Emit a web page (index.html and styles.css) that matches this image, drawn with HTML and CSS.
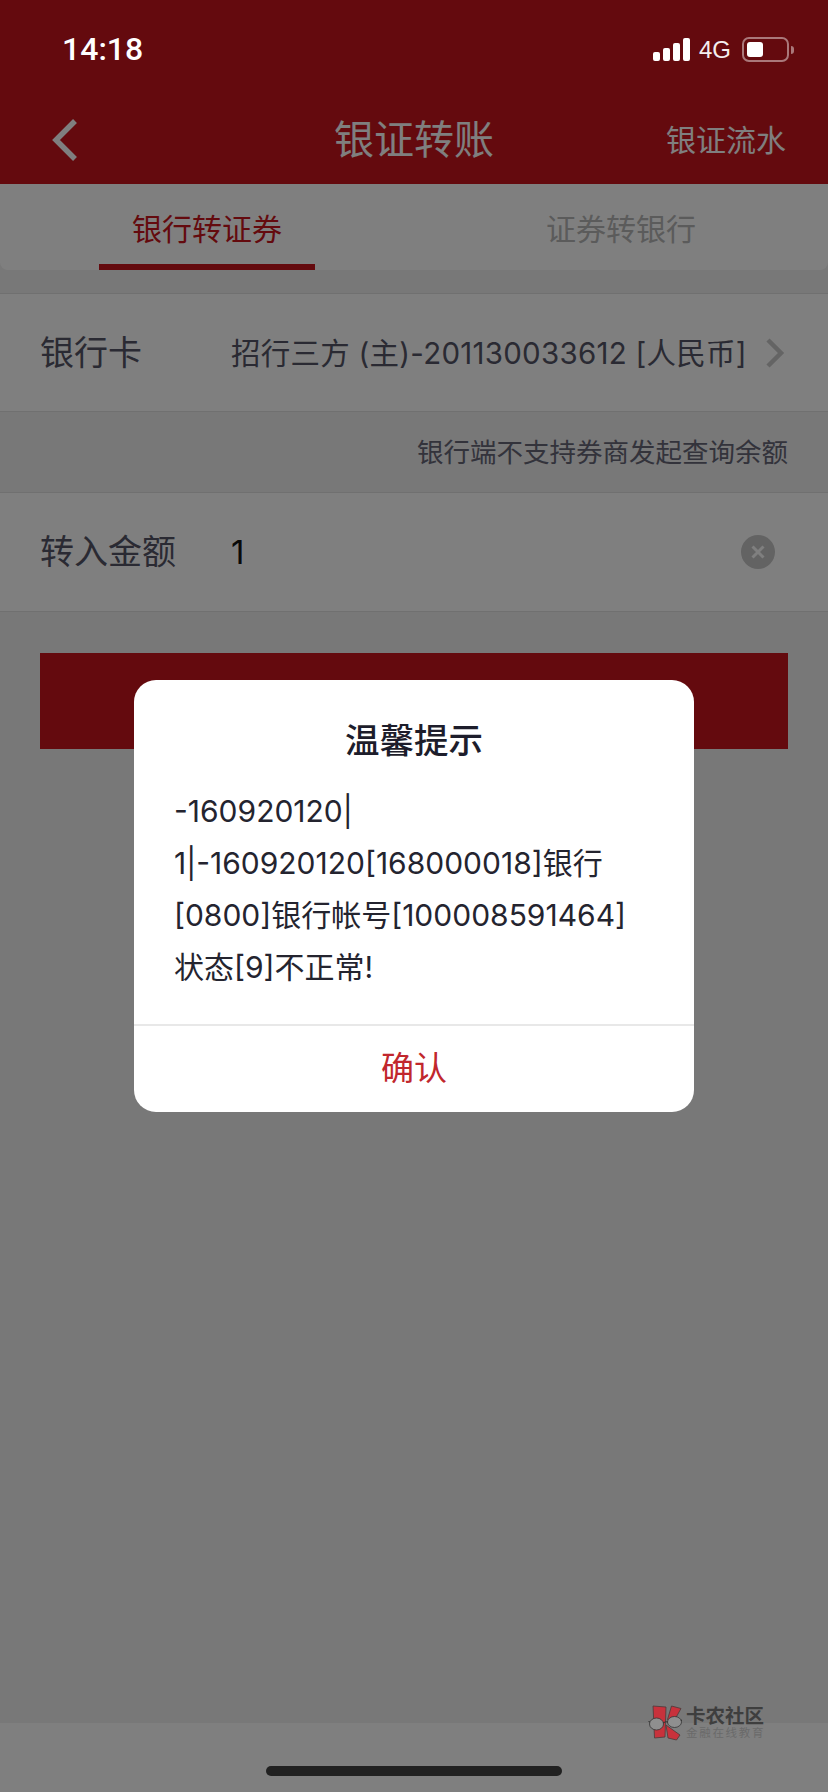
FILE: index.html
```html
<!DOCTYPE html>
<html lang="zh-CN">
<head>
    <meta charset="UTF-8">
    <meta name="viewport" content="width=device-width, initial-scale=1.0">
    <title>银证转账</title>
    <link rel="stylesheet" href="styles.css">
</head>
<body>
    <div class="page">
        <div class="app">
            <header class="header">
                <div class="status-space"></div>
                <div class="nav">
                    <svg class="back" viewBox="0 0 26 42"><path d="M23 2 L4 21 L23 40"/></svg>
                    <div class="nav-title">银证转账</div>
                    <div class="nav-link">银证流水</div>
                </div>
            </header>

            <div class="tabs">
                <div class="tab"><span class="tab-label active">银行转证券</span></div>
                <div class="tab"><span class="tab-label">证券转银行</span></div>
            </div>

            <main class="content">
                <div class="row row-card">
                    <div class="row-label">银行卡</div>
                    <div class="row-value">招行三方 (主)-201130033612 [人民币]</div>
                    <svg class="chevron" viewBox="0 0 20 32"><path d="M3 3 L16 16 L3 29"/></svg>
                </div>
                <div class="note">银行端不支持券商发起查询余额</div>
                <div class="row row-amount">
                    <div class="row-label">转入金额</div>
                    <div class="row-value amount">1</div>
                    <svg class="clear" viewBox="0 0 34 34">
                        <circle cx="17" cy="17" r="17"/>
                        <path d="M11.5 11.5 L22.5 22.5 M22.5 11.5 L11.5 22.5"/>
                    </svg>
                </div>
                <div class="submit"></div>
            </main>

            <div class="safe-area"></div>
        </div>

        <!-- 遮罩和弹窗 -->
        <div class="overlay">
            <div class="dialog">
                <div class="dialog-title">温馨提示</div>
                <div class="dialog-body">-160920120|<br>1|-160920120[168000018]银行<br>[0800]银行帐号[100008591464]<br>状态[9]不正常!</div>
                <div class="dialog-btn">确认</div>
            </div>
        </div>

        <div class="status-bar">
            <div class="time">14:18</div>
            <div class="status-right">
                <div class="signal">
                    <span class="bar bar1"></span>
                    <span class="bar bar2"></span>
                    <span class="bar bar3"></span>
                    <span class="bar bar4"></span>
                </div>
                <div class="network">4G</div>
                <div class="battery"><span class="battery-level"></span></div>
                <span class="battery-cap"></span>
            </div>
        </div>

        <div class="watermark">
            <svg class="wm-logo" viewBox="0 0 34 36">
                <path class="wm-red" d="M5 1 L18 2 L17 32 L6.5 33 Z"/>
                <path class="wm-red" d="M23.5 1 L33 3.5 L25.5 17 L19.5 14.5 Z"/>
                <path class="wm-red" d="M18 20 L32 30 L28.5 35 L20 33 Z"/>
                <ellipse class="wm-lens" cx="8.5" cy="19" rx="7" ry="6"/>
                <ellipse class="wm-lens" cx="26.5" cy="17" rx="7" ry="5.5"/>
                <path class="wm-frame" d="M15 18 Q17.5 16 20 17 M2 17 L0.5 16.5 M33 16 L34 14.5"/>
            </svg>
            <div class="wm-text">
                <div class="wm-name">卡农社区</div>
                <div class="wm-sub">金融在线教育</div>
            </div>
        </div>

        <div class="home-bar"></div>
    </div>
</body>
</html>
```

FILE: styles.css
```css
* {
    box-sizing: border-box;
}

body {
    margin: 0;
    font-family: Inter, "Noto Sans CJK SC", sans-serif;
    color: #333;
}

.page {
    position: relative;
    width: 828px;
    height: 1792px;
    overflow: hidden;
}

.app {
    display: flex;
    flex-direction: column;
    height: 100%;
    background-color: #f0f0f0;
}

/* 顶部 */
.header {
    height: 184px;
    background-color: #c8141c;
}

.status-space {
    height: 96px;
}

.nav {
    display: flex;
    align-items: center;
    justify-content: center;
    position: relative;
    height: 88px;
    padding-bottom: 7px;
}

.back {
    position: absolute;
    left: 52px;
    top: 23px;
    width: 26px;
    height: 42px;
}

.back path {
    fill: none;
    stroke: #fff;
    stroke-width: 5.5;
}

.nav-title {
    font-size: 40px;
    color: #fff;
}

.nav-link {
    position: absolute;
    right: 42px;
    top: 20px;
    font-size: 30px;
    color: #fff;
}

/* 标签页 */
.tabs {
    display: grid;
    grid-template-columns: 1fr 1fr;
    height: 86px;
    background-color: #fff;
    border-radius: 0 0 8px 8px;
}

.tab {
    display: flex;
    justify-content: center;
}

.tab-label {
    width: 216px;
    height: 86px;
    padding-top: 6px;
    display: flex;
    align-items: center;
    justify-content: center;
    font-size: 30px;
    color: #b6b6b6;
    border-bottom: 6px solid transparent;
}

.tab-label.active {
    color: #c8141c;
    border-bottom-color: #c8141c;
}

/* 表单 */
.content {
    flex: 1;
    padding-top: 23px;
}

.row {
    display: flex;
    align-items: center;
    padding-left: 40px;
    background-color: #fff;
    border-top: 1px solid #e0e0e0;
    border-bottom: 1px solid #e0e0e0;
}

.row-card {
    height: 119px;
}

.row-amount {
    height: 120px;
}

.row-label {
    width: 191px;
    padding-bottom: 5px;
    font-size: 34px;
    color: #555566;
}

.row-value {
    flex: 1;
    padding-bottom: 4px;
    font-size: 29.5px;
    letter-spacing: 0.25px;
    color: #555566;
}

.amount {
    padding-bottom: 0;
    font-size: 33px;
    color: #141414;
}

.chevron {
    width: 20px;
    height: 32px;
    margin-right: 43px;
}

.chevron path {
    fill: none;
    stroke: #c8c8c8;
    stroke-width: 4.5;
}

.clear {
    width: 34px;
    height: 34px;
    margin-right: 53px;
}

.clear circle {
    fill: #c6c6c6;
}

.clear path {
    fill: none;
    stroke: #fff;
    stroke-width: 3;
}

.note {
    height: 80px;
    padding: 0 40px 4px;
    display: flex;
    align-items: center;
    justify-content: flex-end;
    font-size: 26.5px;
    color: #666677;
}

.submit {
    height: 96px;
    margin: 41px 40px 0;
    background-color: #c8141c;
}

.safe-area {
    height: 69px;
    background-color: #fefefe;
}

/* 弹窗 */
.overlay {
    position: absolute;
    top: 0;
    left: 0;
    right: 0;
    bottom: 0;
    display: flex;
    align-items: center;
    justify-content: center;
    background-color: rgba(0, 0, 0, 0.5);
}

.dialog {
    width: 560px;
    height: 432px;
    display: flex;
    flex-direction: column;
    background-color: #fff;
    border-radius: 22px;
}

.dialog-title {
    margin-top: 38px;
    text-align: center;
    font-size: 34.5px;
    line-height: 46px;
    font-weight: 500;
    color: #1d1d2b;
}

.dialog-body {
    flex: 1;
    margin-top: 21px;
    padding: 0 40px;
    font-size: 30px;
    line-height: 52px;
    color: #24242f;
}

.dialog-btn {
    height: 88px;
    padding-bottom: 6px;
    display: flex;
    align-items: center;
    justify-content: center;
    border-top: 2px solid #e8e8e8;
    font-size: 33px;
    color: #c1272d;
}

/* 状态栏 */
.status-bar {
    position: absolute;
    top: 0;
    left: 0;
    right: 0;
    height: 96px;
}

.time {
    position: absolute;
    left: 62px;
    top: 30px;
    font-family: Roboto, sans-serif;
    font-size: 32px;
    font-weight: 500;
    color: #fff;
}

.status-right {
    position: absolute;
    left: 653px;
    top: 37px;
    width: 142px;
    height: 25px;
    display: flex;
    align-items: center;
}

.signal {
    display: flex;
    align-items: flex-end;
    gap: 3px;
    height: 23px;
    width: 37px;
}

.bar {
    width: 7px;
    background-color: #fff;
    border-radius: 2px;
}

.bar1 {
    height: 9px;
}

.bar2 {
    height: 13px;
}

.bar3 {
    height: 18px;
}

.bar4 {
    height: 23px;
}

.network {
    width: 40px;
    margin-left: 9px;
    font-family: "Liberation Sans", sans-serif;
    font-size: 24px;
    color: #f4eeee;
}

.battery {
    width: 47px;
    height: 25px;
    margin-left: 3px;
    padding: 3px;
    border: 2px solid rgba(255, 255, 255, 0.45);
    border-radius: 7px;
}

.battery-level {
    display: block;
    width: 16px;
    height: 15px;
    background-color: #fff;
    border-radius: 3px;
}

.battery-cap {
    width: 3px;
    height: 8px;
    margin-left: 2px;
    background-color: rgba(255, 255, 255, 0.45);
    border-radius: 0 3px 3px 0;
}

/* 水印 */
.watermark {
    position: absolute;
    left: 648px;
    top: 1705px;
    display: flex;
    gap: 4px;
}

.wm-logo {
    width: 34px;
    height: 36px;
}

.wm-red {
    fill: #c8323c;
    stroke: #4a3a3a;
    stroke-width: 0.8;
}

.wm-lens {
    fill: #8f8f8f;
    stroke: #333;
    stroke-width: 0.8;
}

.wm-frame {
    fill: none;
    stroke: #333;
    stroke-width: 1;
}

.wm-text {
    margin-top: 1px;
}

.wm-name {
    font-size: 19.5px;
    line-height: 20px;
    font-weight: 700;
    color: #3e3e3e;
}

.wm-sub {
    margin-top: 1px;
    font-size: 11.5px;
    line-height: 13px;
    letter-spacing: 1.7px;
    color: #6a6a6a;
}

.home-bar {
    position: absolute;
    left: 266px;
    top: 1766px;
    width: 296px;
    height: 10px;
    background-color: #212121;
    border-radius: 5px;
}
```
